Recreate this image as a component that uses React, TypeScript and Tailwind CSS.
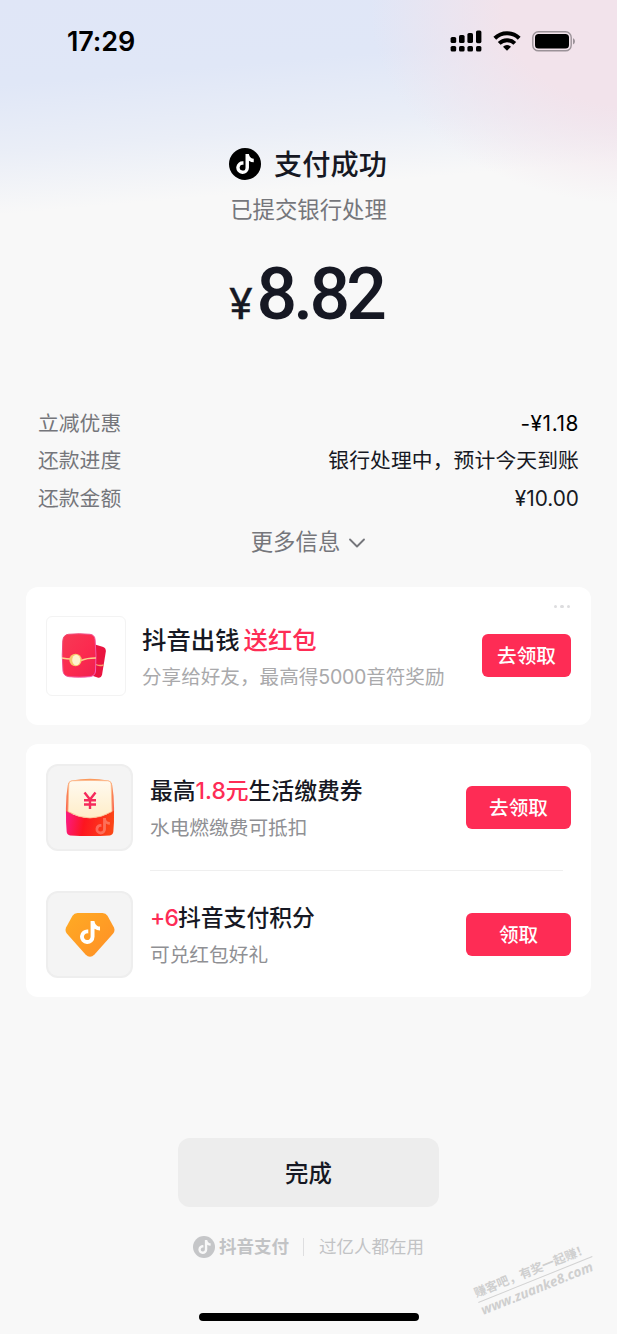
import { ChevronDown } from 'lucide-react';
import { FaTiktok } from 'react-icons/fa6';

interface DetailRowProps {
  label: string;
  value: string;
  valueClass?: string;
}

function DetailRow({ label, value, valueClass = 'text-[#161823]' }: DetailRowProps) {
  return (
    <div className="flex h-[37.5px] items-center justify-between text-[20.8px] leading-[30px]">
      <span className="text-[#75767b]">{label}</span>
      <span className={valueClass}>{value}</span>
    </div>
  );
}

interface ClaimButtonProps {
  label: string;
  className: string;
}

function ClaimButton({ label, className }: ClaimButtonProps) {
  return (
    <button
      className={`h-[43px] shrink-0 rounded-md bg-[#fe2c55] pt-px text-[19.6px] leading-[43px] font-medium text-white ${className}`}
    >
      {label}
    </button>
  );
}

interface OfferRowProps {
  icon: React.ReactNode;
  title: React.ReactNode;
  subtitle: string;
  action: string;
}

function OfferRow({ icon, title, subtitle, action }: OfferRowProps) {
  return (
    <div className="flex h-[126.5px] items-center pr-5 pl-5">
      <div className="flex h-[87px] w-[87px] shrink-0 items-center justify-center rounded-xl border-2 border-[#eeeeee] bg-[#f4f4f4]">
        {icon}
      </div>
      <div className="ml-[17px] flex-1 pt-[3px]">
        <div className="h-[38px] text-[22.8px] leading-[38px] font-medium text-[#161823]">{title}</div>
        <div className="h-[36px] text-[19.7px] leading-[36px] text-[#8f9094]">{subtitle}</div>
      </div>
      <ClaimButton label={action} className="w-[105px]" />
    </div>
  );
}

function StatusBar() {
  return (
    <div className="flex h-[82px] items-center justify-between pr-[42px] pl-[67px]">
      <span className="pt-[2px] text-[27px] leading-8 font-semibold tracking-[-0.1px] text-black">17:29</span>
      <div className="flex items-center">
        <svg width="32" height="23" viewBox="0 0 32 23" fill="#000">
          <rect x="0.6" y="7" width="5.6" height="6" rx="1.6" />
          <rect x="9" y="5" width="5.6" height="8" rx="1.6" />
          <rect x="17.4" y="3" width="5.6" height="10" rx="1.6" />
          <rect x="26" y="0.4" width="5.4" height="12.8" rx="1.6" />
          <rect x="0.6" y="16" width="5.6" height="5.6" rx="1.6" />
          <rect x="9" y="16" width="5.6" height="5.6" rx="1.6" />
          <rect x="17.4" y="16" width="5.6" height="5.6" rx="1.6" />
          <rect x="26" y="16" width="5.4" height="5.6" rx="1.6" />
        </svg>
        <svg className="ml-[11px]" width="28" height="20" viewBox="0 0 28 20" fill="none" stroke="#000" strokeWidth="4">
          <path d="M1.8 7.2a17.4 17.4 0 0 1 24.4 0" />
          <path d="M6.2 12.4a11.1 11.1 0 0 1 15.6 0" />
          <path d="M14 19.8l-4-4.1a5.8 5.8 0 0 1 8 0z" fill="#000" stroke="none" />
        </svg>
        <svg className="ml-[11px]" width="43" height="21" viewBox="0 0 43 21">
          <rect x="0.8" y="0.8" width="38.4" height="19" rx="5.6" fill="none" stroke="#9b9298" strokeWidth="1.4" />
          <rect x="3" y="3" width="34" height="14.6" rx="3.6" fill="#000" />
          <path d="M41 7.2c1.4.5 1.9 1.6 1.9 3.1s-.5 2.6-1.9 3.1z" fill="#9b9298" />
        </svg>
      </div>
    </div>
  );
}

function RedPackets() {
  return (
    <svg width="46" height="46" viewBox="0 0 46 46">
      <defs>
        <linearGradient id="packet" x1="0" y1="0" x2="1" y2="1">
          <stop offset="0" stopColor="#f63a55" />
          <stop offset="0.55" stopColor="#fc2a4f" />
          <stop offset="1" stopColor="#f0204f" />
        </linearGradient>
        <linearGradient id="rim" x1="0" y1="0" x2="1" y2="1">
          <stop offset="0" stopColor="#f0456b" />
          <stop offset="1" stopColor="#f65fc0" />
        </linearGradient>
      </defs>
      <path d="M34 11.5l7.5 2.2q3.8 1.2 3.3 5L41 42q-1 3.6-4.500 2.500L32 43z" fill="#ea1440" />
      <path d="M35 31.5q3 1.8 7.500.5" fill="none" stroke="#f9a36b" strokeWidth="1.4" />
      <path
        d="M7.5 1.3Q18 .2 29 1.3q4.8.6 5.1 5.5Q35.6 22 34.5 38q-.4 5-5.5 5.7-10.5 1-21 0-5.5-.7-6-5.7Q.6 22 1.8 7.5 2.4 1.9 7.5 1.3z"
        fill="url(#packet)"
        stroke="url(#rim)"
        strokeWidth="1"
      />
      <path d="M1 25q7 1.5 13 .8M20 27.5q6-2.6 15-2.5" fill="none" stroke="#fbd08c" strokeWidth="1.4" />
      <circle cx="14.5" cy="27" r="6.2" fill="#f7c96f" />
      <ellipse cx="15.2" cy="27" rx="4" ry="5.2" fill="#fff3cf" />
    </svg>
  );
}

function CouponEnvelope() {
  return (
    <svg width="52" height="60" viewBox="0 0 52 60">
      <defs>
        <linearGradient id="pocket" x1="0" y1="0.7" x2="1" y2="0.8">
          <stop offset="0" stopColor="#fb1a78" />
          <stop offset="0.35" stopColor="#fd1520" />
          <stop offset="1" stopColor="#fb4a16" />
        </linearGradient>
        <linearGradient id="back" x1="0" y1="0" x2="0" y2="1">
          <stop offset="0" stopColor="#fb9a5c" />
          <stop offset="1" stopColor="#f9604e" />
        </linearGradient>
        <linearGradient id="paper" x1="0" y1="0" x2="0" y2="1">
          <stop offset="0" stopColor="#fffaf0" />
          <stop offset="1" stopColor="#ffedc8" />
        </linearGradient>
      </defs>
      <path d="M8 2.500q18-3.400 36 0 3.600.6 4.200 4.500Q50.500 20 50 36H2Q1.500 20 3.800 7 4.400 3.100 8 2.500z" fill="url(#back)" />
      <path d="M2 33q24 14 48-.5.3 12-.7 21.500-.4 3-3.500 3.400-19.800 1.400-39.600 0-3.200-.4-3.500-3.400Q1.800 45 2 33z" fill="url(#pocket)" />
      <path
        d="M8.200 2.800q17.800-.8 35.600 0 3.200.2 3.400 3.400l.8 27.300Q26 46.500 4 33.500L4.800 6.200q.2-3.200 3.400-3.400z"
        fill="url(#paper)"
        stroke="#fdb98a"
        strokeWidth="0.8"
      />
      <path d="M20.500 14.500l5.500 7 5.500-7M26 21.500V31M20 22.300h12M20 26.500h12" fill="none" stroke="#f62a5b" strokeWidth="2.4" />
      <g transform="translate(31.500 40) scale(.032)" fill="#fff" opacity=".28">
        <path d="M448 209.900a210.100 210.100 0 0 1-122.800-39.300v178.800A162.600 162.600 0 1 1 185 188.300v89.900a74.600 74.600 0 1 0 52.200 71.200V0h88a121.200 121.200 0 0 0 122.800 122z" />
      </g>
    </svg>
  );
}

function PointsGem() {
  return (
    <div className="relative flex h-[46px] w-[50px] justify-center">
      <svg width="50" height="46" viewBox="0 0 50 46">
        <defs>
          <linearGradient id="gem" x1="0" y1="0" x2="1" y2="1">
            <stop offset="0" stopColor="#ffab24" />
            <stop offset="1" stopColor="#ff8f26" />
          </linearGradient>
        </defs>
        <path
          d="M12.500 2h25q3.300 0 5 2.800l6.300 11.400q1.700 3.600-.8 6.500L29.500 43.500q-4.500 4.400-9 0L2 22.700q-2.500-2.900-.8-6.500L7.500 4.800Q9.200 2 12.500 2z"
          fill="url(#gem)"
        />
      </svg>
      <FaTiktok className="absolute top-[10px] left-[15px] h-[23px] w-[20px] text-white" />
    </div>
  );
}

function Watermark() {
  return (
    <div className="absolute top-[1263px] left-[474px] w-[123px] rotate-[-22deg] text-[#cfcfcf]">
      <div className="h-[17px] border-b border-[#d2d2d2] text-[12.2px] leading-[14px] font-bold whitespace-nowrap">
        赚客吧，有奖一起赚！
      </div>
      <div className="font-['Open_Sans',sans-serif] text-[13.5px] leading-[17px] font-bold whitespace-nowrap italic">
        www.zuanke8.com
      </div>
    </div>
  );
}

export default function App() {
  return (
    <div className="relative flex h-[1334px] w-[617px] flex-col overflow-hidden bg-[#f8f8f8] bg-[radial-gradient(ellipse_270px_195px_at_640px_10px,#f2e3eb_0%,#f2e3eb_50%,rgba(242,227,235,0)_100%),linear-gradient(175deg,#e0e6f7_0px,#e0e7f7_85px,#eaeef7_152px,#f8f8f8_214px)] font-['Inter','Noto_Sans_CJK_SC',sans-serif]">
      <StatusBar />

      {/* Payment result */}
      <div className="flex flex-col items-center pt-[60px]">
        <div className="flex h-11 items-center pr-px">
          <div className="flex h-8 w-8 items-center justify-center rounded-full bg-black">
            <FaTiktok className="h-5 w-[18px] text-white" />
          </div>
          <h1 className="ml-[13px] pt-[2px] text-[28.2px] leading-[44px] font-medium text-[#161823]">支付成功</h1>
        </div>
        <p className="mt-1 text-[22.4px] leading-[40px] text-[#75767b]">已提交银行处理</p>
        <div className="mt-[22px] flex h-[86px] items-baseline pr-[5px] text-[#161823]">
          <span className="text-[43px] leading-[86px] [-webkit-text-stroke:0.4px_#161823]">¥</span>
          <span className="ml-[4px] font-['Roboto',sans-serif] text-[71.5px] leading-[86px] font-medium tracking-[-3.8px]">
            8.82
          </span>
        </div>
      </div>

      {/* Payment details */}
      <div className="mt-[67px] px-[38px]">
        <DetailRow label="立减优惠" value="-¥1.18" valueClass="tracking-[0.6px] text-black" />
        <DetailRow label="还款进度" value="银行处理中，预计今天到账" valueClass="tracking-[0.1px] text-[#161823]" />
        <DetailRow label="还款金额" value="¥10.00" />
      </div>
      <button className="mt-[6px] flex h-[36px] items-center justify-center pl-[5px] text-[22.4px] leading-[36px] text-[#75767b]">
        更多信息
        <ChevronDown className="mt-[2px] ml-[3px] h-[28px] w-[28px]" strokeWidth={1.6} />
      </button>

      {/* Share promotion */}
      <div className="relative mx-[26px] mt-[27px] flex h-[138px] items-center rounded-xl bg-white px-5">
        <div className="flex h-[80px] w-[80px] shrink-0 items-center justify-center rounded-md border border-[#f3f3f3] pr-1">
          <RedPackets />
        </div>
        <div className="ml-4 flex-1 pt-[5px]">
          <div className="flex h-[38px] gap-1 text-[24.4px] leading-[38px] font-medium text-[#161823]">
            <span>抖音出钱</span>
            <span className="text-[#fe2c55]">送红包</span>
          </div>
          <div className="h-[37px] text-[19.6px] leading-[37px] whitespace-nowrap text-[#a9a9ab]">
            分享给好友，最高得<span className="tracking-[-0.3px]">5000</span>音符奖励
          </div>
        </div>
        <ClaimButton label="去领取" className="w-[89px]" />
        <div className="absolute top-[18px] right-[21px] flex gap-[3px]">
          <i className="h-[3.5px] w-[3.5px] rounded-full bg-[#dddddf]" />
          <i className="h-[3.5px] w-[3.5px] rounded-full bg-[#dddddf]" />
          <i className="h-[3.5px] w-[3.5px] rounded-full bg-[#dddddf]" />
        </div>
      </div>

      {/* Rewards */}
      <div className="mx-[26px] mt-[19px] h-[253px] rounded-xl bg-white pt-px">
        <OfferRow
          icon={<CouponEnvelope />}
          title={
            <>
              最高<span className="text-[#fe2c55]">1.8元</span>生活缴费券
            </>
          }
          subtitle="水电燃缴费可抵扣"
          action="去领取"
        />
        <div className="-mt-px mr-7 ml-[124px] h-px bg-[#efefef]" />
        <OfferRow
          icon={<PointsGem />}
          title={
            <>
              <span className="tracking-[-0.8px] text-[#fe2c55]">+6</span>抖音支付积分
            </>
          }
          subtitle="可兑红包好礼"
          action="领取"
        />
      </div>

      {/* Footer */}
      <button className="mx-auto mt-[141px] h-[69px] w-[261px] rounded-xl bg-[#ededed] pt-px text-[23.4px] leading-[70px] font-medium text-[#161823]">
        完成
      </button>
      <div className="mt-[26px] flex h-7 items-center justify-center text-[17.5px] leading-7 text-[#c2c3c5]">
        <span className="flex h-[22px] w-[22px] items-center justify-center rounded-full bg-[#c5c6c8]">
          <FaTiktok className="h-[14px] w-[13px] text-[#f8f8f8]" />
        </span>
        <span className="ml-1 font-bold">抖音支付</span>
        <span className="mr-[15px] ml-[14px] h-[18px] w-px bg-[#dedee0]" />
        <span>过亿人都在用</span>
      </div>
      <div className="mx-auto mt-[52px] h-2 w-[220px] rounded-full bg-black" />

      <Watermark />
    </div>
  );
}
